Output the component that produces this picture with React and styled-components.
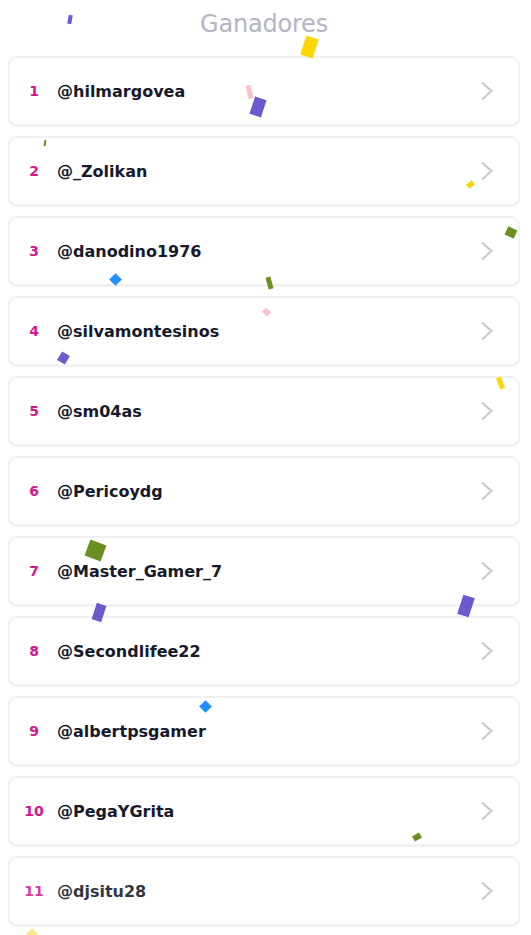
import styled, { createGlobalStyle } from 'styled-components'

const GlobalStyle = createGlobalStyle`
    html, body {
        margin: 0;
        padding: 0;
        background: #ffffff;
    }
    body {
        font-family: "DejaVu Sans", "Liberation Sans", sans-serif;
    }
`

const Page = styled.div`
    position: relative;
    width: 531px;
    min-height: 935px;
    padding: 8px 11px 8px 8px;
    box-sizing: border-box;
    overflow: hidden;
`

const Title = styled.h1`
    margin: 0 0 16px 0;
    height: 32px;
    line-height: 32px;
    text-align: center;
    font-size: 24px;
    font-weight: 500;
    color: #b3b5c3;
    letter-spacing: -0.2px;
`

const List = styled.div`
    display: flex;
    flex-direction: column;
    gap: 10px;
`

const Card = styled.div`
    height: 70px;
    box-sizing: border-box;
    border: 2px solid #f1f1f1;
    border-radius: 9px;
    box-shadow: 0 1px 0 #f1f1f1;
    background: #ffffff;
    display: flex;
    align-items: center;
    padding: 0 24px 0 12px;
`

const Position = styled.div`
    width: 24px;
    margin-right: 11px;
    text-align: center;
    font-size: 14px;
    font-weight: 700;
    color: #d3168e;
    opacity: ${p => (p.$faded ? 0.85 : 1)};
`

const Name = styled.div`
    flex: 1;
    font-size: 16px;
    font-weight: 700;
    color: #161a2c;
    opacity: ${p => (p.$faded ? 0.88 : 1)};
`

const Chevron = styled.svg`
    width: 14px;
    height: 20px;
    flex-shrink: 0;
`

const Confetti = styled.span`
    position: absolute;
    left: ${p => p.$x - p.$w / 2}px;
    top: ${p => p.$y - p.$h / 2}px;
    width: ${p => p.$w}px;
    height: ${p => p.$h}px;
    background: ${p => p.$color};
    transform: rotate(${p => p.$rot}deg);
    pointer-events: none;
`

const PURPLE = '#6a5acd'
const YELLOW = '#ffd700'
const PINK = '#ffc0cb'
const GREEN = '#6b8e23'
const BLUE = '#1e90ff'

const winners = [
    '@hilmargovea',
    '@_Zolikan',
    '@danodino1976',
    '@silvamontesinos',
    '@sm04as',
    '@Pericoydg',
    '@Master_Gamer_7',
    '@Secondlifee22',
    '@albertpsgamer',
    '@PegaYGrita',
    '@djsitu28',
]

const confetti = [
    { x: 70, y: 19, w: 4, h: 9, rot: 10, color: PURPLE },
    { x: 309, y: 47, w: 13, h: 20, rot: 18, color: YELLOW },
    { x: 249, y: 92, w: 5, h: 14, rot: -12, color: PINK },
    { x: 258, y: 107, w: 12, h: 18, rot: 18, color: PURPLE },
    { x: 45, y: 143, w: 2, h: 6, rot: 10, color: GREEN },
    { x: 470, y: 184, w: 7, h: 5, rot: -40, color: YELLOW },
    { x: 511, y: 232, w: 10, h: 9, rot: 25, color: GREEN },
    { x: 115, y: 279, w: 9, h: 9, rot: 45, color: BLUE },
    { x: 269, y: 283, w: 5, h: 12, rot: -15, color: GREEN },
    { x: 266, y: 312, w: 7, h: 6, rot: 40, color: PINK },
    { x: 63, y: 358, w: 9, h: 10, rot: 30, color: PURPLE },
    { x: 500, y: 383, w: 5, h: 12, rot: -20, color: YELLOW },
    { x: 95, y: 550, w: 17, h: 17, rot: 20, color: GREEN },
    { x: 99, y: 612, w: 10, h: 17, rot: 18, color: PURPLE },
    { x: 466, y: 606, w: 12, h: 20, rot: 18, color: PURPLE },
    { x: 205, y: 706, w: 9, h: 9, rot: 45, color: BLUE },
    { x: 417, y: 837, w: 8, h: 6, rot: -30, color: GREEN },
    { x: 32, y: 934, w: 8, h: 8, rot: 45, color: '#ffe680' },
]

function ChevronIcon() {
    return (
        <Chevron viewBox="0 0 14 20" fill="none">
            <path d="M2 1.5 L11.5 10 L2 18.5" stroke="#c9c9c9" strokeWidth="2.2" />
        </Chevron>
    )
}

function App() {
    return (
        <Page>
            <GlobalStyle />
            <Title>Ganadores</Title>
            <List>
                {winners.map((name, i) => {
                    const faded = i === winners.length - 1
                    return (
                        <Card key={name}>
                            <Position $faded={faded}>{i + 1}</Position>
                            <Name $faded={faded}>{name}</Name>
                            <ChevronIcon />
                        </Card>
                    )
                })}
            </List>
            {confetti.map((c, i) => (
                <Confetti key={i} $x={c.x} $y={c.y} $w={c.w} $h={c.h} $rot={c.rot} $color={c.color} />
            ))}
        </Page>
    )
}

export default App
